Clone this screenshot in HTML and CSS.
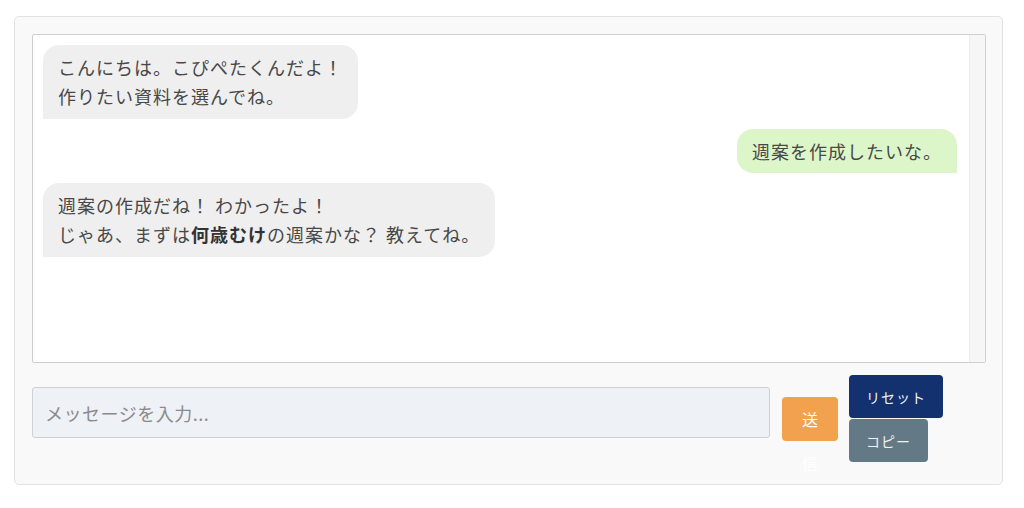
FILE: index.html
```html
<!DOCTYPE html>
<html lang="ja">
<head>
<meta charset="utf-8">
<title>こぴぺたくん</title>
<link rel="stylesheet" href="styles.css">
</head>
<body>
<div class="panel">
  <div class="chat">
    <div class="messages">
      <div class="msg bot">こんにちは。こぴぺたくんだよ！<br>作りたい資料を選んでね。</div>
      <div class="msg user">週案を作成したいな。</div>
      <div class="msg bot">週案の作成だね！ わかったよ！<br>じゃあ、まずは<b>何歳むけ</b>の週案かな？ 教えてね。</div>
    </div>
    <div class="track"></div>
  </div>
  <div class="controls">
    <input class="input" type="text" placeholder="メッセージを入力...">
    <button class="send">送信</button>
    <div class="side">
      <button class="btn reset">リセット</button>
      <button class="btn copy">コピー</button>
    </div>
  </div>
</div>
</body>
</html>
```

FILE: styles.css
```css
html, body {
  margin: 0;
  padding: 0;
  background: #ffffff;
  font-family: "Noto Sans CJK JP", "Noto Sans", sans-serif;
}

.panel {
  box-sizing: border-box;
  width: 989px;
  margin: 16px 0 0 14px;
  padding: 17px 16px 22px 17px;
  background: #f9f9f9;
  border: 1px solid #e2e2e2;
  border-radius: 5px;
}

.chat {
  box-sizing: border-box;
  width: 954px;
  height: 329px;
  background: #ffffff;
  border: 1px solid #cfcfcf;
  border-radius: 2px;
  display: flex;
}

.messages {
  flex: 1;
  padding: 10px 12px 10px 10px;
  display: flex;
  flex-direction: column;
  align-items: flex-start;
  gap: 10px;
}

.track {
  box-sizing: border-box;
  width: 16px;
  background: #f6f6f6;
  border-left: 1px solid #ececec;
}

.msg {
  box-sizing: border-box;
  padding: 8px 15px;
  font-size: 18px;
  line-height: 28.8px;
  letter-spacing: 1px;
  color: #484848;
  border-radius: 16px;
  white-space: nowrap;
}

.msg b {
  font-weight: 700;
  color: #333;
}

.bot {
  background: #efefef;
  border-bottom-left-radius: 0;
}

.user {
  align-self: flex-end;
  background: #ddf6c9;
  border-bottom-right-radius: 0;
}

.controls {
  margin-top: 12px;
  display: flex;
  align-items: center;
  height: 87px;
}

.input {
  box-sizing: border-box;
  width: 738px;
  height: 51px;
  margin: 0 0 12px 0;
  padding: 0 12px;
  background: #eef1f6;
  border: 1px solid #cdd0d4;
  border-radius: 3px;
  font-family: "Noto Sans CJK JP", "Noto Sans", sans-serif;
  font-size: 18px;
  letter-spacing: 0.5px;
  color: #444;
  outline: none;
}

.input::placeholder {
  color: #8b8b8b;
}

.send {
  box-sizing: border-box;
  width: 56px;
  height: 44px;
  margin-left: 12px;
  padding: 0 18px;
  background: #f2a14f;
  border: none;
  border-radius: 4px;
  color: #ffffff;
  font-family: "Noto Sans CJK JP", "Noto Sans", sans-serif;
  font-size: 16px;
  line-height: 44px;
  overflow: visible;
  align-self: center;
}

.side {
  margin-left: 11px;
  display: flex;
  flex-direction: column;
  align-items: flex-start;
  gap: 1px;
}

.btn {
  box-sizing: border-box;
  height: 43px;
  padding: 0 17px;
  border: none;
  border-radius: 4px;
  color: #f0f0f0;
  font-family: "Noto Sans CJK JP", "Noto Sans", sans-serif;
  font-size: 14px;
  letter-spacing: 1px;
}

.reset {
  background: #13306f;
}

.copy {
  background: #647986;
}
```
